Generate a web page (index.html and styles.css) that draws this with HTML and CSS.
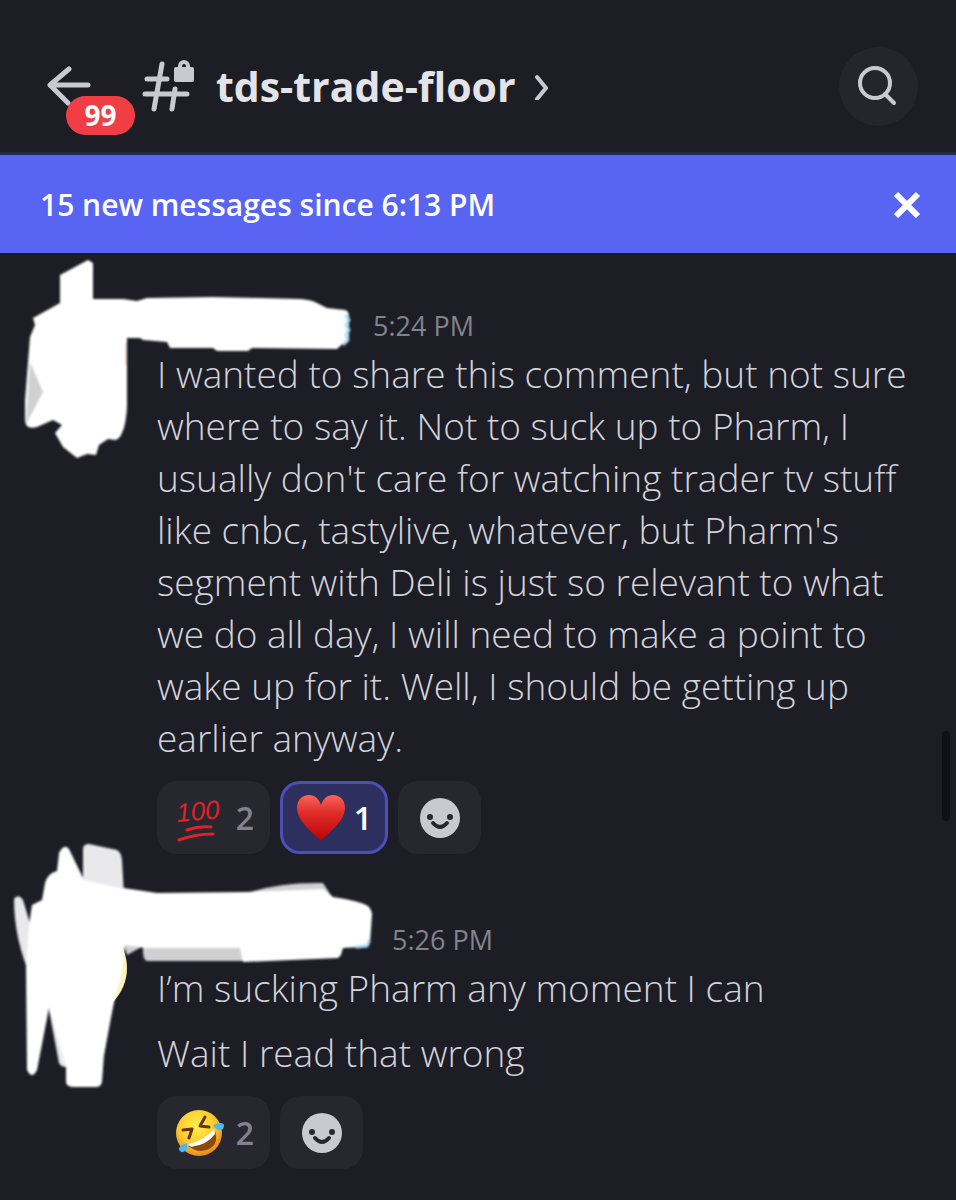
FILE: index.html
```html
<!DOCTYPE html>
<html lang="en">
<head>
    <meta charset="UTF-8">
    <meta name="viewport" content="width=device-width, initial-scale=1.0">
    <title>tds-trade-floor</title>
    <link rel="stylesheet" href="styles.css">
</head>
<body>
    <header class="topbar">
        <button class="back" type="button" aria-label="Back, 99 unread">
            <svg width="46" height="40" viewBox="0 0 46 40">
                <path d="M24 3 5 19l18 18M5 19h38"/>
            </svg>
            <span class="badge">99</span>
        </button>
        <button class="channel" type="button">
            <svg class="hash" width="54" height="54" viewBox="142 58 54 54">
                <path class="line" d="M162 63l-8 45M175 88l-3 20M147 78h20M145 93h42"/>
                <rect x="174" y="66" width="20" height="15" rx="2"/>
                <path class="shackle" d="M180 68v-3a4 4 0 0 1 8 0v3"/>
            </svg>
            <h1>tds-trade-floor</h1>
            <svg class="chevron" width="16" height="28" viewBox="0 0 16 28">
                <path d="M3 5l9 11-9 11"/>
            </svg>
        </button>
        <button class="search" type="button" aria-label="Search">
            <svg width="44" height="44" viewBox="0 0 44 44">
                <circle cx="18" cy="19" r="15"/>
                <path d="M28 30l9 9"/>
            </svg>
        </button>
    </header>

    <div class="banner">
        <span>15 new messages since 6:13 PM</span>
        <button class="close" type="button" aria-label="Mark as read">
            <svg width="28" height="28" viewBox="0 0 28 28">
                <path d="M3 4l22 22M25 4L3 26"/>
            </svg>
        </button>
    </div>

    <main class="chat">
        <article class="message first">
            <!-- marker strokes over avatar and name -->
            <svg class="scribble" width="380" height="220" viewBox="0 253 380 220" aria-hidden="true">
                <g class="soft">
                    <path d="M60 275L88 260 93 263V299H123L137 301 147 298 213 297 300 299Q311 300 315 302L327 308 345 310Q349 311 349 317V338L337 349 252 348 248 351H217L213 348H170L167 342 143 340 140 338H127V407Q126 425 122 433 119 440 115 440L108 439 99 445 96 455 87 454 77 458 63 447 55 433 62 425 53 420 37 427Q25 430 25 420V400L30 337 35 325 33 318 60 303z"/>
                    <path class="grey" d="M30 362L26 424 43 392z"/>
                    <path class="cyan" d="M346 316l3 4-3 5 3 5-3 5 2 5-4 4"/>
                    <path class="pink" d="M126 344v20"/>
                </g>
            </svg>
            <div class="meta"><time>5:24 PM</time></div>
            <p>I wanted to share this comment, but not sure where to say it. Not to suck up to Pharm, I usually don't care for watching trader tv stuff like cnbc, tastylive, whatever, but Pharm's segment with Deli is just so relevant to what we do all day, I will need to make a point to wake up for it. Well, I should be getting up earlier anyway.</p>
            <div class="reactions">
                <button class="reaction" type="button">
                    <svg class="hundred" width="48" height="48" viewBox="0 0 48 48">
                        <text x="2" y="28" transform="rotate(-5 2 28)">100</text>
                        <path d="M12 36q12-4 24-3M4 46q16-6 34-6"/>
                    </svg>
                    <span>2</span>
                </button>
                <button class="reaction mine" type="button" aria-pressed="true">
                    <svg width="50" height="48" viewBox="0 0 50 48">
                        <defs>
                            <linearGradient id="red" x1="0" y1="0" x2="0" y2="1">
                                <stop offset="0" stop-color="#f9655a"/>
                                <stop offset=".4" stop-color="#e02b28"/>
                                <stop offset="1" stop-color="#b80306"/>
                            </linearGradient>
                        </defs>
                        <path fill="url(#red)" d="M25 47C20 41 1 28 1 14 1 6 6 1 13 1c6 0 10 4 12 10C27 5 31 1 37 1c7 0 12 5 12 13 0 14-19 27-24 33z"/>
                    </svg>
                    <span>1</span>
                </button>
                <button class="reaction add" type="button" aria-label="Add reaction">
                    <svg width="42" height="42" viewBox="0 0 42 42">
                        <circle class="face" cx="21" cy="21" r="20"/>
                        <circle cx="11" cy="20" r="3"/>
                        <circle cx="31" cy="20" r="3"/>
                        <path d="M14 26q7 8 14 0"/>
                    </svg>
                </button>
            </div>
        </article>

        <article class="message">
            <svg class="scribble" width="400" height="260" viewBox="0 840 400 260" aria-hidden="true">
                <circle class="yellow" cx="79" cy="968" r="48"/>
                <g class="soft">
                    <path class="light" d="M83 848Q84 844 89 844L117 850Q121 852 122 860L124 895H83zM14 899Q18 893 23 900L32 930V980Q14 940 14 899zM49 1010L59 1063Q61 1067 66 1067L104 1055 115 997z"/>
                    <path class="grey" d="M247 893Q280 882 323 883L332 897 300 905H247zM143 945H245V961H147Q143 960 143 951zM124 944L145 945 127 955z"/>
                    <path d="M29 925L32 905 42 900 45 883Q48 873 57 871L59 853Q64 843 69 849L84 880 110 886 157 893 247 892 323 889 333 897Q360 901 368 906 372 910 372 915L370 943Q369 947 362 947L343 948 341 955 338 958 243 962 240 948H145L125 945 121 977 115 997 110 1020 104 1055 102 1082Q101 1087 96 1087H72Q66 1086 66 1082V1067L49 1008 37 1070Q32 1080 27 1070L26 967z"/>
                    <path class="cyan" d="M357 947l10-1 2-5"/>
                </g>
            </svg>
            <div class="meta"><time>5:26 PM</time></div>
            <p>I’m sucking Pharm any moment I can</p>
            <p>Wait I read that wrong</p>
            <div class="reactions">
                <button class="reaction" type="button">
                    <svg width="50" height="48" viewBox="0 0 50 48">
                        <defs>
                            <radialGradient id="gold" cx=".45" cy=".35" r=".65">
                                <stop offset="0" stop-color="#fff04d"/>
                                <stop offset=".6" stop-color="#fdca2e"/>
                                <stop offset="1" stop-color="#e8881b"/>
                            </radialGradient>
                        </defs>
                        <circle cx="24" cy="24" r="23" fill="url(#gold)"/>
                        <path fill="#8a4a08" d="M13 37Q30 36 40 22 44 33 36 39 25 46 13 37z"/>
                        <path fill="#fff" d="M13 35Q29 32 39 20L40 25Q32 36 16 38z"/>
                        <path class="eyes" d="M8 21l9-1-3 9M30 8l-5 9 9 1"/>
                        <path fill="#4bb8f0" d="M38 16q10-4 11 0 0 6-5 5-4-1-6-5zM12 34q-9 3-8 7 4 5 8-1z"/>
                    </svg>
                    <span>2</span>
                </button>
                <button class="reaction add" type="button" aria-label="Add reaction">
                    <svg width="42" height="42" viewBox="0 0 42 42">
                        <circle class="face" cx="21" cy="21" r="20"/>
                        <circle cx="11" cy="20" r="3"/>
                        <circle cx="31" cy="20" r="3"/>
                        <path d="M14 26q7 8 14 0"/>
                    </svg>
                </button>
            </div>
        </article>
        <div class="scrollbar"></div>
    </main>
</body>
</html>
```
FILE: styles.css
```css
*{
    box-sizing: border-box;
    margin: 0;
    padding: 0;
}
body{
    min-height: 100vh;
    background: #1d1d25;
    color: #c9c9d2;
    font-family: "Open Sans", "Noto Sans", sans-serif;
}
button{
    border: 0;
    background: none;
    color: inherit;
    font: inherit;
    cursor: pointer;
}
svg{
    display: block;
    fill: none;
    stroke-linecap: round;
    stroke-linejoin: round;
}

/* top bar */
.topbar{
    display: flex;
    align-items: center;
    height: 155px;
    padding: 20px 38px 0 45px;
    border-bottom: 3px solid #262b49;
}
.back{
    position: relative;
    width: 97px;
}
.back svg{
    stroke: #c9c9d2;
    stroke-width: 5;
}
.badge{
    position: absolute;
    left: 21px;
    top: 30px;
    width: 69px;
    height: 39px;
    border-radius: 20px;
    background: #f03e44;
    color: #fff;
    font-size: 28px;
    font-weight: 700;
    line-height: 38px;
    text-align: center;
}
.channel{
    display: flex;
    align-items: center;
}
.hash{
    fill: #c9c9d2;
}
.hash .line{
    stroke: #c9c9d2;
    stroke-width: 5;
}
.hash .shackle{
    fill: none;
    stroke: #c9c9d2;
    stroke-width: 4;
}
.channel h1{
    margin: 0 18px 0 20px;
    color: #e4e4e8;
    font-size: 41px;
    line-height: 52px;
}
.chevron{
    stroke: #c9c9d2;
    stroke-width: 4;
}
.search{
    display: flex;
    align-items: center;
    justify-content: center;
    width: 79px;
    height: 79px;
    margin-left: auto;
    border-radius: 50%;
    background: #25262d;
}
.search svg{
    stroke: #c9c9d2;
    stroke-width: 4;
}

/* unread banner */
.banner{
    display: flex;
    align-items: center;
    justify-content: space-between;
    height: 98px;
    padding: 0 35px 0 40px;
    background: #5865f2;
    color: #fff;
    font-size: 30px;
    font-weight: 600;
}
.close svg{
    stroke: #fff;
    stroke-width: 6;
    stroke-linecap: butt;
}

/* messages */
.chat{
    position: relative;
}
.message{
    position: relative;
    padding: 64px 36px 0 157px;
}
.message.first{
    padding-top: 51px;
}
.scribble{
    position: absolute;
    left: 0;
    top: 0;
    fill: #fff;
}
.message:not(.first) .scribble{
    top: -14px;
}
.scribble .soft{
    filter: blur(1px);
}
.scribble .light{
    fill: #e9e9eb;
}
.scribble .grey{
    fill: #d0d0d3;
}
.scribble .cyan{
    fill: none;
    stroke: #a5dcf5;
    stroke-width: 3;
}
.scribble .pink{
    fill: none;
    stroke: #f7d5cc;
    stroke-width: 2;
}
.scribble .yellow{
    fill: #fbf3b8;
}
.meta{
    height: 44px;
    padding-left: 216px;
    color: #82838c;
    font-size: 27px;
    line-height: 44px;
}
.message:not(.first) .meta{
    padding-left: 235px;
}
.message p{
    color: #d2d2db;
    font-size: 37px;
    font-weight: 300;
    line-height: 52px;
}
.message p + p{
    margin-top: 13px;
}
.reactions{
    display: flex;
    gap: 10px;
    margin-top: 17px;
}
.reaction{
    display: flex;
    align-items: center;
    justify-content: space-between;
    width: 113px;
    height: 73px;
    padding: 0 16px 0 18px;
    border-radius: 20px;
    background: #26272f;
    color: #82838c;
    font-size: 32px;
    font-weight: 600;
}
.reaction.mine{
    width: 108px;
    padding: 0 13px;
    border: 3px solid #4a50b4;
    background: #2d2f5e;
    color: #fff;
}
.reaction.add{
    justify-content: center;
    width: 83px;
    padding: 0;
}
.add svg{
    fill: #26272f;
}
.add .face{
    fill: #c9c9d2;
}
.add path{
    fill: none;
    stroke: #26272f;
    stroke-width: 4;
}
.hundred text{
    fill: #e0202a;
    font-family: "Liberation Sans", sans-serif;
    font-size: 26px;
    font-style: italic;
    font-weight: 400;
}
.hundred path{
    stroke: #e0202a;
    stroke-width: 3;
}
.eyes{
    stroke: #653506;
    stroke-width: 3;
}
.scrollbar{
    position: absolute;
    right: 6px;
    top: 478px;
    width: 8px;
    height: 90px;
    border-radius: 4px;
    background: #101116;
}
```
